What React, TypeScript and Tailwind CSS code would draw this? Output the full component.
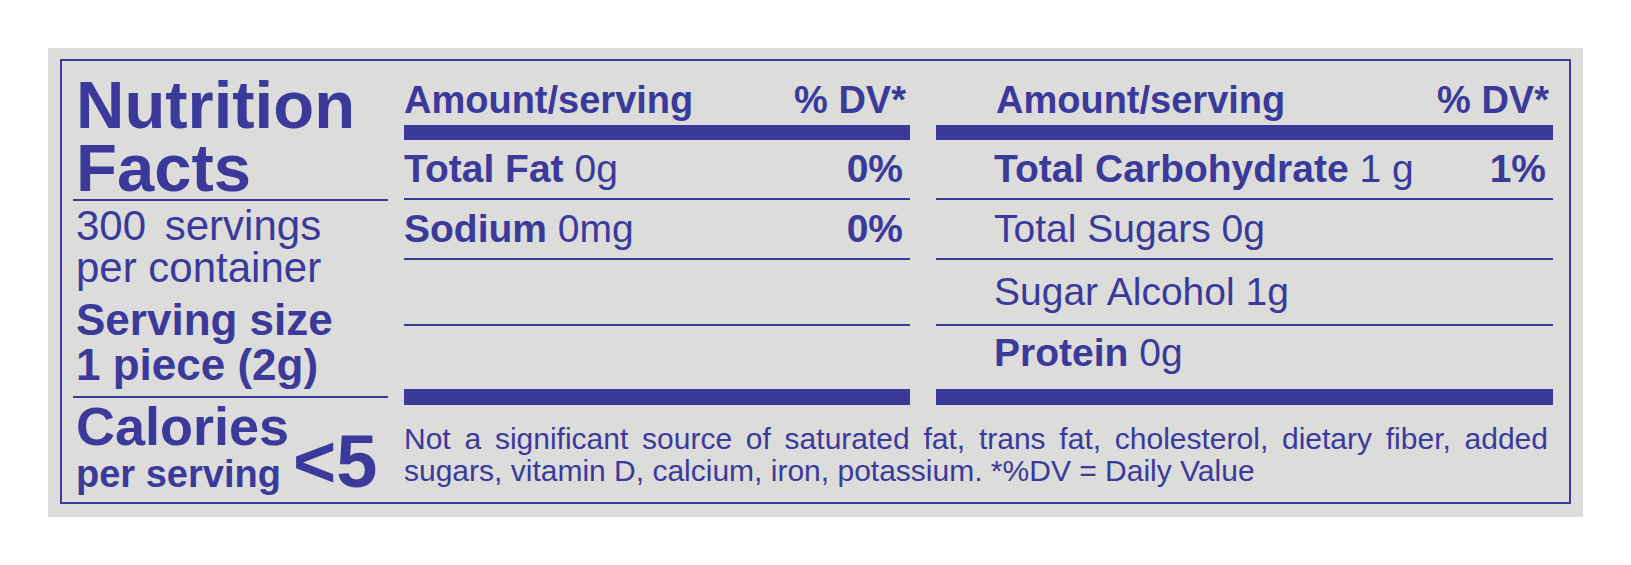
import React from 'react'

type Row = {
  label: string
  value?: string
  dv?: string
  bold?: boolean
  height: string
  lead: string
  last?: boolean
}

const leftRows: Row[] = [
  { label: 'Total Fat', value: '0g', dv: '0%', bold: true, height: 'h-[60px]', lead: 'leading-[58px]' },
  { label: 'Sodium', value: '0mg', dv: '0%', bold: true, height: 'h-[60px]', lead: 'leading-[58px]' },
  { label: '', height: 'h-[66px]', lead: 'leading-[64px]' },
  { label: '', height: 'h-[63px]', lead: 'leading-[54px]', last: true },
]

const rightRows: Row[] = [
  { label: 'Total Carbohydrate', value: '1 g', dv: '1%', bold: true, height: 'h-[60px]', lead: 'leading-[58px]' },
  { label: 'Total Sugars 0g', height: 'h-[60px]', lead: 'leading-[58px]' },
  { label: 'Sugar Alcohol 1g', height: 'h-[66px]', lead: 'leading-[64px]' },
  { label: 'Protein', value: '0g', bold: true, height: 'h-[63px]', lead: 'leading-[54px]', last: true },
]

const NutrientColumn: React.FC<{ rows: Row[]; indent: string; labelPad: string }> = ({ rows, indent, labelPad }) => (
  <div className="flex flex-col">
    <div className={`mt-[17px] flex justify-between text-[38px] font-bold leading-[44px] ${indent} pr-[4px]`}>
      <span>Amount/serving</span>
      <span>% DV*</span>
    </div>
    <div className="mt-[3px] h-[15px] bg-[#3b3a9a]" />
    {rows.map((row, i) => (
      <div
        key={i}
        className={`flex justify-between text-[39px] ${row.height} ${row.lead} ${labelPad} pr-[7px] ${
          row.last ? '' : 'border-b-2 border-[#3b3a9a]'
        }`}
      >
        <span className="whitespace-nowrap">
          {row.bold ? <span className="font-bold">{row.label}</span> : row.label}
          {row.value && <> {row.value}</>}
        </span>
        {row.dv && <span className="font-bold">{row.dv}</span>}
      </div>
    ))}
    <div className="h-[16px] bg-[#3b3a9a]" />
  </div>
)

export default function App() {
  return (
    <div className="min-h-[565px] bg-white p-[48px] font-['Liberation_Sans',Arial,sans-serif] text-[#3b3a9a]">
      <div className="h-[469px] bg-[#dcdcda] px-[12px] pt-[11px] pb-[13px]">
        <div className="flex h-full border-2 border-[#3b3a9a]">
          {/* left title column */}
          <div className="ml-[11px] flex w-[315px] flex-col">
            <div className="mt-[12px] border-b-2 border-[#3b3a9a] pl-[3px] text-[67px] font-bold leading-[63px]">
              Nutrition
              <br />
              Facts
            </div>
            <div className="mt-[4px] pl-[3px] text-[42px] leading-[42px]">
              <div className="[word-spacing:7px]">300 servings</div>
              <div>per container</div>
            </div>
            <div className="mt-[8px] border-b-2 border-[#3b3a9a] pb-[9px] pl-[3px] text-[44px] font-bold leading-[45px]">
              <div>Serving size</div>
              <div>1 piece (2g)</div>
            </div>
            <div className="mt-[3px] flex pl-[3px] font-bold [align-items:last_baseline]">
              <div className="flex flex-col">
                <span className="text-[54px] leading-[50px]">Calories</span>
                <span className="text-[38px] leading-[47px]">per serving</span>
              </div>
              <span className="ml-[4px] text-[74px] leading-[60px]">&lt;5</span>
            </div>
          </div>

          {/* nutrient tables + footnote */}
          <div className="ml-[16px] mr-[16px] flex flex-1 flex-col">
            <div className="grid grid-cols-[506px_617px] gap-x-[26px]">
              <NutrientColumn rows={leftRows} indent="pl-0" labelPad="pl-0" />
              <NutrientColumn rows={rightRows} indent="pl-[60px]" labelPad="pl-[58px]" />
            </div>
            <div className="mt-[18px] pr-[5px] text-[30px] leading-[32px]">
              <div className="text-justify [text-align-last:justify]">
                Not a significant source of saturated fat, trans fat, cholesterol, dietary fiber, added
              </div>
              <div>sugars, vitamin D, calcium, iron, potassium. *%DV = Daily Value</div>
            </div>
          </div>
        </div>
      </div>
    </div>
  )
}
